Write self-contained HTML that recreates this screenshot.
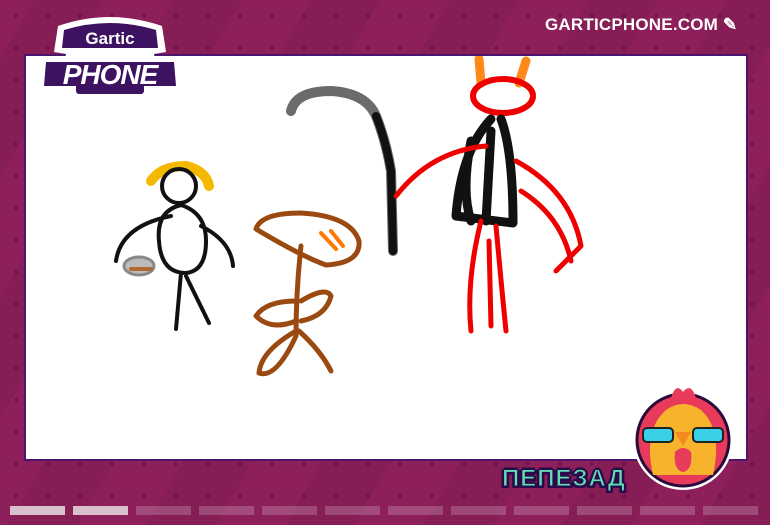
<!DOCTYPE html>
<html><head><meta charset="utf-8"><style>
body{margin:0;width:770px;height:525px;overflow:hidden;background:#8d1f5a;font-family:"Liberation Sans",sans-serif;position:relative}
.bg{position:absolute;inset:0;background:repeating-linear-gradient(-60deg,rgba(0,0,0,0.05) 0 60px,rgba(0,0,0,0) 60px 120px),radial-gradient(circle,rgba(60,0,60,0.35) 1.6px,transparent 2px) 0 0/32px 32px}
.canvas{position:absolute;left:24px;top:54px;width:720px;height:403px;background:#fff;border:2px solid #4b1470}
.site{position:absolute;left:545px;top:15px;color:#fff;font-weight:bold;font-size:17px;letter-spacing:0.2px}
.name{position:absolute;left:502px;top:465px;font-size:24px;font-weight:bold;letter-spacing:1px;color:#5fe0b4;-webkit-text-stroke:1px #2a0a4a;text-shadow:0 2px 0 #2a0a4a,2px 0 0 #2a0a4a,-2px 0 0 #2a0a4a,0 -2px 0 #2a0a4a,2px 2px 0 #2a0a4a,-2px 2px 0 #2a0a4a}
.bar{position:absolute;top:506px;height:9px;width:55px;background:rgba(255,255,255,0.2)}
</style></head><body>
<div class="bg"></div>
<div class="canvas">
<svg width="720" height="403" viewBox="25 55 720 403" fill="none" stroke-linecap="round" stroke-linejoin="round">
<path d="M290 110 Q295 90 330 90 Q365 92 375 115 Q385 140 390 170 L392 250" stroke="#6b6b6b" stroke-width="10"/>
<path d="M375 115 Q385 140 390 170 L392 250" stroke="#111" stroke-width="8"/>
<path d="M150 180 Q160 165 185 165 Q205 170 208 185" stroke="#f5b800" stroke-width="10"/>
<circle cx="178" cy="185" r="17" stroke="#111" stroke-width="4"/>
<path d="M180 204 Q155 210 158 240 Q160 272 185 272 Q205 270 205 240 Q205 212 180 204 M170 215 Q120 225 115 260 M200 225 Q230 240 232 265 M180 272 L175 328 M185 275 L208 322" stroke="#111" stroke-width="4"/>
<ellipse cx="138" cy="265" rx="15" ry="9" fill="#bbb" stroke="#888" stroke-width="3"/>
<path d="M130 268 L150 268" stroke="#b06a30" stroke-width="4"/>
<path d="M255 228 Q260 212 300 212 Q350 215 358 240 Q360 262 325 264 Q300 255 255 228 Z M300 245 Q295 290 295 335 M295 300 Q265 300 255 315 Q270 330 295 320 M300 300 Q325 285 330 295 Q325 315 300 320 M295 330 Q260 350 258 372 Q275 378 295 335 M298 330 Q320 350 330 370" stroke="#9a4a10" stroke-width="5"/>
<path d="M320 232 L335 248 M330 230 L342 245" stroke="#ff7a00" stroke-width="4"/>
<path d="M478 58 L480 82 M525 60 L518 82" stroke="#ff8a1a" stroke-width="9"/>
<ellipse cx="502" cy="95" rx="30" ry="17" stroke="#e00" stroke-width="6"/>
<path d="M490 118 Q460 150 455 215 L512 222 Q512 150 500 118 M470 140 Q460 190 470 220 M490 130 L485 220" stroke="#111" stroke-width="9"/>
<path d="M395 195 Q430 150 485 145 M515 160 Q570 190 580 245 L555 270 M520 190 Q560 215 570 260 M480 220 Q465 280 470 330 M495 225 Q500 280 505 330 M488 240 L490 325" stroke="#e00" stroke-width="5"/>
</svg>
</div>
<svg style="position:absolute;left:36px;top:10px" width="148" height="90" viewBox="0 0 148 90">
<path d="M22 16 Q74 -2 126 16 L130 42 L118 44 L120 56 L140 60 L144 80 L110 86 L38 86 L4 80 L8 60 L28 56 L30 44 L18 42 Z" fill="#fff"/>
<path d="M28 20 Q74 6 120 20 L122 38 L26 38 Z" fill="#3d1260"/>
<path d="M10 52 L138 52 L140 76 L8 76 Z" fill="#3d1260"/>
<rect x="40" y="74" width="68" height="10" rx="3" fill="#3d1260"/>
<text x="74" y="34" text-anchor="middle" fill="#fff" font-weight="bold" font-size="17" font-family="Liberation Sans">Gartic</text>
<text x="74" y="74" text-anchor="middle" fill="#fff" font-weight="bold" font-style="italic" font-size="28" font-family="Liberation Sans" letter-spacing="-1">PHONE</text>
</svg>
<div class="site">GARTICPHONE.COM ✎</div>
<svg style="position:absolute;left:631px;top:380px" width="104" height="112" viewBox="0 0 104 112">
<circle cx="52" cy="60" r="50" fill="#fff"/><circle cx="52" cy="60" r="46" fill="#e83a5a" stroke="#2a0a3a" stroke-width="3"/>
<path d="M22 95 Q12 50 35 30 Q52 18 70 30 Q92 50 82 95 Z" fill="#f7b32b"/>
<path d="M40 18 Q45 2 52 12 Q60 2 65 18 Z" fill="#e83a5a"/>
<rect x="12" y="48" width="30" height="14" rx="4" fill="#3ad0e8" stroke="#222" stroke-width="2"/><rect x="62" y="48" width="30" height="14" rx="4" fill="#3ad0e8" stroke="#222" stroke-width="2"/>
<path d="M44 52 L60 52 L52 66 Z" fill="#f48a20"/><path d="M44 72 Q52 64 60 72 Q62 90 52 92 Q42 90 44 72Z" fill="#e83a5a"/>
</svg>
<div class="name">ПЕПЕЗАД</div>
<div class="bar" style="left:10px;background:#d8c0cc"></div><div class="bar" style="left:73px;background:#d8c0cc"></div>
<div class="bar" style="left:136px"></div><div class="bar" style="left:199px"></div><div class="bar" style="left:262px"></div><div class="bar" style="left:325px"></div><div class="bar" style="left:388px"></div><div class="bar" style="left:451px"></div><div class="bar" style="left:514px"></div><div class="bar" style="left:577px"></div><div class="bar" style="left:640px"></div><div class="bar" style="left:703px"></div>
</body></html>
